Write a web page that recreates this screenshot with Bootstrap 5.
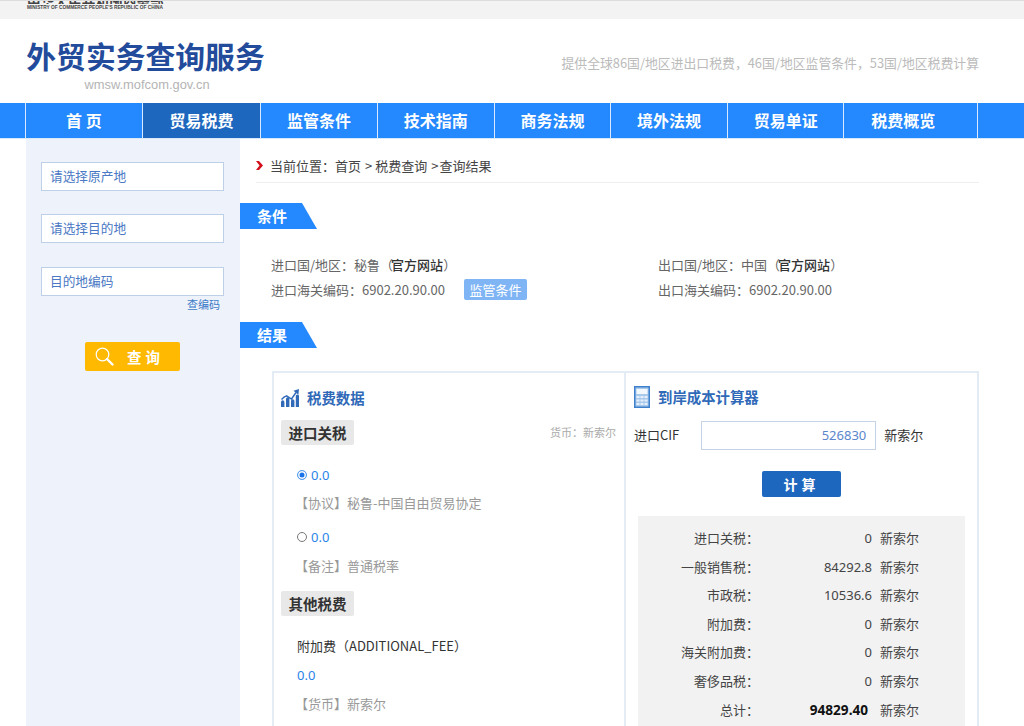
<!DOCTYPE html>
<html lang="zh-CN">
<head>
<meta charset="utf-8">
<title>外贸实务查询服务</title>
<link rel="stylesheet" href="https://cdn.jsdelivr.net/npm/bootstrap@5.3.0/dist/css/bootstrap.min.css">
<style>
html,body{height:726px;overflow:hidden}
body{font-family:"Noto Sans CJK SC","Noto Sans",sans-serif;font-size:13px;color:#555;background:#fff;line-height:1.4}
.topstrip{height:19px;background:#f3f3f3;border-top:1px solid #ddd;padding-left:27px;overflow:hidden}
.topcn{height:3px;overflow:hidden;font-size:13.5px;line-height:0;letter-spacing:.2px;color:#444;font-weight:700}
.topen{font-family:"Liberation Sans",sans-serif;font-size:4.8px;font-weight:700;line-height:6px;color:#444;white-space:nowrap;margin-top:1px}
.mast{height:84px;padding:18px 45px 0 26px}
.brand{width:239px;text-align:center}
.brand-t{font-size:29.8px;font-weight:700;line-height:36px;color:#234b9b;white-space:nowrap}
.brand-s{font-family:"Liberation Sans",sans-serif;font-size:12.9px;line-height:20px;color:#b4b4b4;margin-top:2px;padding-left:3px}
.slogan{font-size:12.85px;color:#bbb;padding-top:17px;white-space:nowrap}
.mainnav{height:36px;background:#2488ff;padding-left:25px;border-bottom:1px solid #d9e8fb}
.nav-cell{width:117px;height:35px;border-left:1px solid #d7e8ff;color:#fff;font-size:16px;font-weight:700;line-height:35px;text-align:center;text-decoration:none;white-space:nowrap}
.nav-cell.w1{width:119px}
.nav-cell.cur{background:#1e67be}
.nav-end{width:134px;padding-right:15px}
.nav-last{width:47px;height:35px;border-left:1px solid #d7e8ff}
.pagebody{padding-left:26px}
.sidebar{width:214px;height:600px;flex:none;background:#edf2fb;padding:23px 16px 0 15px}
.sfield{height:29px;border:1px solid #bdd0e8;background:#fff;padding-left:8px;font-size:12.7px;line-height:26px;color:#4a78c4;margin-bottom:23px}
.sfield.gap1{margin-bottom:24px}
.codelink{font-size:11px;line-height:14px;color:#3c7cc8;text-align:right;padding-right:4px;margin-top:-22px}
.qbtn{width:95px;height:29px;margin:31px 0 0 44px;background:#ffb900;border-radius:2px;color:#fff;font-size:14.5px;font-weight:700;letter-spacing:4px;line-height:29px;gap:13px;padding-left:10px}
.content{width:739px;flex:none}
.crumb{margin-left:16px;height:44px;border-bottom:1px solid #eee;padding-top:10px;color:#444;line-height:19px;white-space:nowrap}
.crumb-mark{margin:0 7px 0 0}
.sep{margin:0 3px 0 4px}
.sep2{margin:0 1px 0 4px}
.tabhead{width:77px;height:26px;background:#2488ff;clip-path:polygon(0 0,62px 0,77px 100%,0 100%);color:#fff;font-size:15px;font-weight:700;line-height:26px;padding-left:17px}
.tabfirst{margin-top:20px}
.cond{padding:24px 0 0 31px;height:93px;color:#666}
.cond-row{height:25px;line-height:24px;white-space:nowrap}
.cond-l{width:387px}
.cond b{font-weight:500;color:#333;margin-left:-2px}
.jgbtn{display:inline-block;width:63px;height:21px;line-height:21px;background:#7fb5f5;color:#fff;text-align:center;border-radius:2px;margin-left:19px;vertical-align:top;margin-top:1px}
.panel{margin:23px 0 0 32px;width:707px;height:400px;border:2px solid #e3ecf4}
.pleft{width:352px;flex:none;border-right:2px solid #e3ecf4;padding:13px 8px 0 7px}
.pright{flex:1;padding:12px 0 0 8px;min-width:0}
.phead{font-size:14.4px;font-weight:700;color:#2f69b8;line-height:24px;gap:8px}
.tagrow{margin-top:10px}
.ptag{display:inline-block;width:73px;height:25px;line-height:25px;background:#e8e8e8;border-radius:2px;text-align:center;color:#333;font-size:14.5px;font-weight:700}
.cur-note{font-size:11px;color:#aaa}
.rate{color:#2a84e8;font-family:"Noto Sans",sans-serif;line-height:20px;padding-left:16px}
.radiomark{width:10px;height:10px;border-radius:50%;border:1px solid #777;margin-right:4px;flex:none;background:#fff}
.radiomark.on{border:1px solid #5aa0f2;box-shadow:inset 0 0 0 1.5px #fff;background:#1a73e8}
.note{color:#999;line-height:20px;padding-left:14px}
.plain{color:#333;line-height:20px;padding-left:16px}
.r1{margin-top:20px}.n1{margin-top:8px}.r2{margin-top:14px}.n2{margin-top:9px}.t2{margin-top:15px}.p1{margin-top:20px}.p2{margin-top:9px}.p3{margin-top:9px}
.cifrow{margin-top:12px;color:#333}
.cifinput{width:175px;height:29px;border:1px solid #c6d3e6;text-align:right;padding-right:9px;line-height:27px;color:#5b86cc;font-family:"Noto Sans",sans-serif;margin:0 8px 0 22px}
.calcbtn{width:79px;height:26px;background:#1e67be;color:#fff;border-radius:2px;font-size:14px;font-weight:700;letter-spacing:4px;line-height:26px;text-align:center;margin:21px 0 0 128px}
.resbox{width:327px;height:230px;margin:19px 0 0 4px;background:#f2f2f2;padding-top:8px;color:#444}
.resrow{height:28.6px;line-height:28px}
.res-k{width:121px;text-align:right;flex:none}
.res-v{width:113px;text-align:right;flex:none;font-family:"Noto Sans",sans-serif}
.res-u{margin-left:8px}
.res-b{font-weight:700;font-size:13.6px;color:#111;padding-right:4px}
</style>
</head>
<body>
<div class="topstrip">
  <div class="topcn">中华人民共和国商务部</div>
  <div class="topen">MINISTRY OF COMMERCE PEOPLE'S REPUBLIC OF CHINA</div>
</div>
<header class="mast d-flex justify-content-between">
  <div class="brand">
    <div class="brand-t">外贸实务查询服务</div>
    <div class="brand-s">wmsw.mofcom.gov.cn</div>
  </div>
  <div class="slogan">提供全球86国/地区进出口税费，46国/地区监管条件，53国/地区税费计算</div>
</header>
<nav class="mainnav d-flex">
  <a class="nav-cell" href="#">首 页</a>
  <a class="nav-cell w1 cur" href="#">贸易税费</a>
  <a class="nav-cell" href="#">监管条件</a>
  <a class="nav-cell" href="#">技术指南</a>
  <a class="nav-cell" href="#">商务法规</a>
  <a class="nav-cell" href="#">境外法规</a>
  <a class="nav-cell" href="#">贸易单证</a>
  <a class="nav-cell nav-end" href="#">税费概览</a>
  <div class="nav-last"></div>
</nav>
<div class="pagebody d-flex">
  <aside class="sidebar">
    <div class="sfield">请选择原产地</div>
    <div class="sfield gap1">请选择目的地</div>
    <div class="sfield">目的地编码</div>
    <div class="codelink">查编码</div>
    <div class="qbtn d-flex align-items-center">
      <svg width="19" height="19" viewBox="0 0 19 19" fill="none" stroke="#fff"><circle cx="7.5" cy="7.5" r="6.3" stroke-width="1.2"/><path d="M12 12l5.500 5.500" stroke-width="2.400" stroke-linecap="round"/></svg>
      <span>查询</span>
    </div>
  </aside>
  <main class="content">
    <div class="crumb d-flex align-items-center">
      <svg class="crumb-mark" width="7" height="9" viewBox="0 0 7 9"><path d="M0 0h3l4 4.500L3 9H0l3.500-4.500z" fill="#d3101c"/></svg>
      <span>当前位置：首页<span class="sep">&gt;</span>税费查询<span class="sep2">&gt;</span>查询结果</span>
    </div>
    <div class="tabhead tabfirst">条件</div>
    <section class="cond">
      <div class="cond-row d-flex"><div class="cond-l">进口国/地区：秘鲁（<b>官方网站</b>）</div><div>出口国/地区：中国（<b>官方网站</b>）</div></div>
      <div class="cond-row d-flex"><div class="cond-l">进口海关编码：6902.20.90.00<span class="jgbtn">监管条件</span></div><div>出口海关编码：6902.20.90.00</div></div>
    </section>
    <div class="tabhead cond-next">结果</div>
    <section class="panel d-flex">
      <div class="pleft">
        <div class="phead d-flex align-items-center">
          <svg width="18" height="18" viewBox="0 0 18 18" fill="#2f69b8"><path d="M0 18v-5a1.700 1.700 0 0 1 3.400 0v5zM5 18v-8a1.700 1.700 0 0 1 3.400 0v8zM10 18v-6a1.700 1.700 0 0 1 3.400 0v6zM14.800 18V7a1.600 1.600 0 0 1 3.200 0v11z"/><path d="M0.500 10.500Q3 7.500 5.500 6.800l5 3.200L15 3.500" fill="none" stroke="#2f69b8" stroke-width="1.400"/><path d="M12.500 1.800L18 0l-.6 5.800z"/></svg>
          <span>税费数据</span>
        </div>
        <div class="tagrow d-flex justify-content-between align-items-center">
          <span class="ptag">进口关税</span><span class="cur-note">货币：新索尔</span>
        </div>
        <div class="rate r1 d-flex align-items-center"><span class="radiomark on"></span><span>0.0</span></div>
        <div class="note n1">【协议】秘鲁-中国自由贸易协定</div>
        <div class="rate r2 d-flex align-items-center"><span class="radiomark"></span><span>0.0</span></div>
        <div class="note n2">【备注】普通税率</div>
        <div class="t2"><span class="ptag d-block">其他税费</span></div>
        <div class="plain p1">附加费（ADDITIONAL_FEE）</div>
        <div class="rate p2">0.0</div>
        <div class="note p3">【货币】新索尔</div>
      </div>
      <div class="pright">
        <div class="phead d-flex align-items-center">
          <svg width="16" height="22" viewBox="0 0 16 22"><rect width="16" height="22" fill="#3f80cc"/><rect x="1.500" y="1.500" width="13" height="19" fill="#a9c9ec"/><rect x="2.500" y="3" width="11" height="5" fill="#f3f8fd"/><g fill="#e6f0fa"><rect x="2.500" y="10" width="3" height="2"/><rect x="6.500" y="10" width="3" height="2"/><rect x="10.500" y="10" width="3" height="2"/><rect x="2.500" y="13.500" width="3" height="2"/><rect x="6.500" y="13.500" width="3" height="2"/><rect x="10.500" y="13.500" width="3" height="2"/><rect x="2.500" y="17" width="3" height="2"/><rect x="6.500" y="17" width="3" height="2"/><rect x="10.500" y="17" width="3" height="2"/></g></svg>
          <span>到岸成本计算器</span>
        </div>
        <div class="cifrow d-flex align-items-center">
          <span>进口CIF</span><div class="cifinput">526830</div><span>新索尔</span>
        </div>
        <div class="calcbtn">计算</div>
        <div class="resbox">
          <div class="resrow d-flex"><span class="res-k">进口关税：</span><span class="res-v">0</span><span class="res-u">新索尔</span></div>
          <div class="resrow d-flex"><span class="res-k">一般销售税：</span><span class="res-v">84292.8</span><span class="res-u">新索尔</span></div>
          <div class="resrow d-flex"><span class="res-k">市政税：</span><span class="res-v">10536.6</span><span class="res-u">新索尔</span></div>
          <div class="resrow d-flex"><span class="res-k">附加费：</span><span class="res-v">0</span><span class="res-u">新索尔</span></div>
          <div class="resrow d-flex"><span class="res-k">海关附加费：</span><span class="res-v">0</span><span class="res-u">新索尔</span></div>
          <div class="resrow d-flex"><span class="res-k">奢侈品税：</span><span class="res-v">0</span><span class="res-u">新索尔</span></div>
          <div class="resrow d-flex"><span class="res-k">总计：</span><span class="res-v res-b">94829.40</span><span class="res-u">新索尔</span></div>
        </div>
      </div>
    </section>
  </main>
</div>
</body>
</html>
